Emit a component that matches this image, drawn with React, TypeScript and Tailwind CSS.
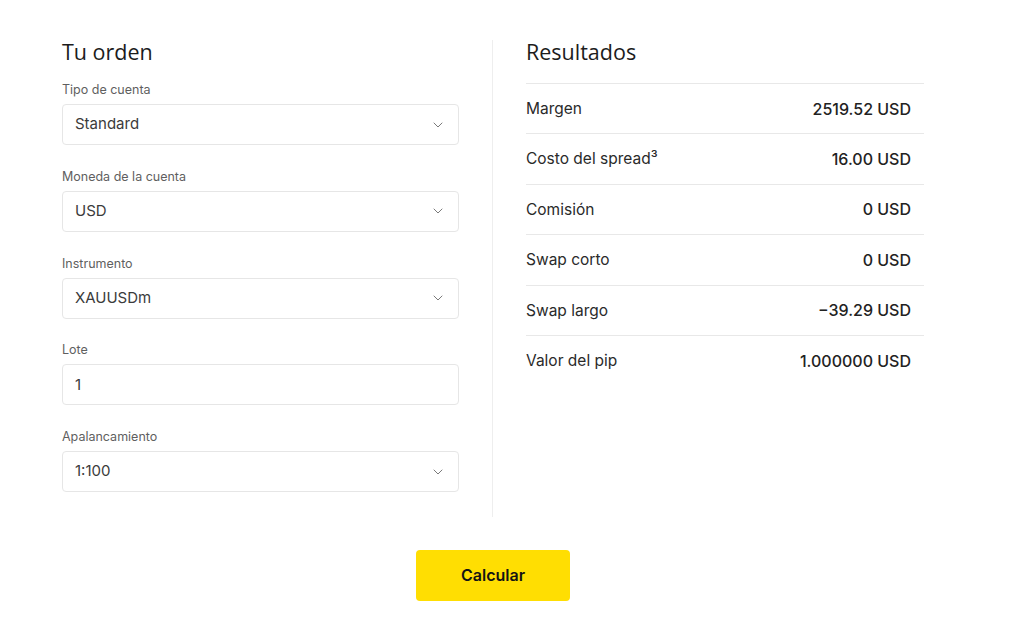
import React from 'react';
import { ChevronDown } from 'lucide-react';

type Field = { label: string; value: string; select: boolean };

const fields: Field[] = [
  { label: 'Tipo de cuenta', value: 'Standard', select: true },
  { label: 'Moneda de la cuenta', value: 'USD', select: true },
  { label: 'Instrumento', value: 'XAUUSDm', select: true },
  { label: 'Lote', value: '1', select: false },
  { label: 'Apalancamiento', value: '1:100', select: true },
];

const results: [string, string][] = [
  ['Margen', '2519.52 USD'],
  ['Costo del spread³', '16.00 USD'],
  ['Comisión', '0 USD'],
  ['Swap corto', '0 USD'],
  ['Swap largo', '−39.29 USD'],
  ['Valor del pip', '1.000000 USD'],
];

export default function App() {
  return (
    <div className="min-h-[621px] bg-white pt-[40px] pl-[62px] text-[#1f1f1f] font-['Inter',sans-serif]">
      <div className="flex w-[862px]">
        {/* Form */}
        <div className="w-[397px] pb-[24.5px]">
          <h2 className="text-[21.5px] leading-[24px] font-medium text-[#1c1c1c] font-['Open_Sans',sans-serif]">Tu orden</h2>
          <div className="mt-[18px] flex flex-col gap-[23.75px]">
            {fields.map(f => (
              <div key={f.label} className="flex flex-col gap-[6px]">
                <label className="text-[12.5px] leading-[16px] text-[#5f5f5f]">{f.label}</label>
                <div className="h-[41px] border border-[#e6e6e6] rounded-[4px] flex items-center justify-between pl-[12px] pr-[12px]">
                  <span className="text-[15px] text-[#3b3b3b]">{f.value}</span>
                  {f.select && <ChevronDown className="w-[16px] h-[16px] text-[#7a7a7a]" strokeWidth={1.5} />}
                </div>
              </div>
            ))}
          </div>
        </div>

        <div className="mx-[33px] w-px bg-[#eeeeee]" />

        {/* Results */}
        <div className="w-[398px]">
          <h2 className="text-[21.5px] leading-[24px] font-medium text-[#1c1c1c] font-['Open_Sans',sans-serif]">Resultados</h2>
          <div className="mt-[19px]">
            {results.map(([k, v]) => (
              <div key={k} className="h-[50.4px] flex items-center justify-between pr-[13px] border-t border-[#e8e8e8]">
                <span className="text-[15.5px] text-[#2a2a2a]">{k}</span>
                <span className="text-[16px] font-medium text-[#222]">{v}</span>
              </div>
            ))}
          </div>
        </div>
      </div>

      <div className="w-[862px] flex justify-center mt-[33px]">
        <button className="w-[154px] h-[51px] rounded-[4px] bg-[#ffde02] text-[16px] font-semibold text-[#141414]">
          Calcular
        </button>
      </div>
    </div>
  );
}
